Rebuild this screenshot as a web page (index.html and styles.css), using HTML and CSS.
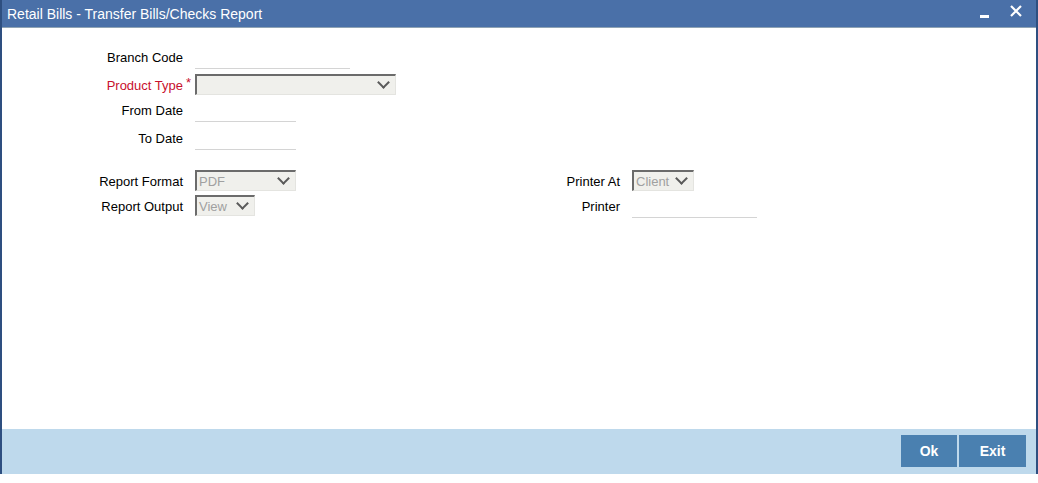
FILE: index.html
```html
<!DOCTYPE html>
<html>
<head>
<meta charset="utf-8">
<link rel="stylesheet" href="styles.css">
</head>
<body>
<div class="window">
  <div class="titlebar">
    <span class="title">Retail Bills - Transfer Bills/Checks Report</span>
    <span class="controls">
      <span class="min"></span>
      <svg class="close" width="12" height="12" viewBox="0 0 12 12"><path d="M1 1L11 11M11 1L1 11" stroke="#fff" stroke-width="2.2"/></svg>
    </span>
  </div>
  <div class="content">
    <div class="group top">
      <div class="row r1"><label class="lbl">Branch Code</label><span class="line w155"></span></div>
      <div class="row r2"><label class="lbl req">Product Type<span class="star">*</span></label><span class="sel w201"><span class="val"></span><span class="chev"></span></span></div>
      <div class="row r3"><label class="lbl">From Date</label><span class="line w101"></span></div>
      <div class="row r4"><label class="lbl">To Date</label><span class="line w101"></span></div>
    </div>
    <div class="cols">
      <div class="group">
        <div class="row r5"><label class="lbl">Report Format</label><span class="sel dis w101"><span class="val">PDF</span><span class="chev"></span></span></div>
        <div class="row r6"><label class="lbl">Report Output</label><span class="sel dis w60"><span class="val">View</span><span class="chev"></span></span></div>
      </div>
      <div class="group right">
        <div class="row r5"><label class="lbl lbl2">Printer At</label><span class="sel dis w62"><span class="val">Client</span><span class="chev"></span></span></div>
        <div class="row r6"><label class="lbl lbl2">Printer</label><span class="line w125"></span></div>
      </div>
    </div>
  </div>
  <div class="footer">
    <button class="btn ok">Ok</button><button class="btn exit">Exit</button>
  </div>
</div>
</body>
</html>
```
FILE: styles.css
```css
html, body { margin: 0; padding: 0; background: #fff; }
body { width: 1038px; height: 483px; overflow: hidden; font-family: "Liberation Sans", Arial, sans-serif; font-size: 13px; color: #000; }
.window { width: 1034px; height: 474px; border-left: 2px solid #2e4f80; border-right: 2px solid #2e4f80; display: flex; flex-direction: column; }
.titlebar { height: 28px; background: #4a70a8; border-bottom: 1px solid #8fa3b4; display: flex; align-items: center; justify-content: space-between; padding: 0 0 0 5px; box-sizing: border-box; flex: none; }
.title { color: #fff; font-size: 14px; }
.controls { display: flex; align-items: center; gap: 21px; margin-right: 14px; margin-top: -6px; }
.min { width: 9px; height: 3px; background: #fff; margin-top: 11px; }
.close { display: block; }
.content { flex: 1; position: relative; }
.group { display: flex; flex-direction: column; }
.top { padding-top: 17px; }
.row { display: flex; align-items: center; }
.lbl { width: 181px; text-align: right; padding-right: 12px; box-sizing: content-box; flex: none; line-height: 15px; padding-top: 2px; }
.req { color: #c8102e; position: relative; }
.star { position: absolute; right: 4px; top: -1px; color: #c8102e; font-size: 13px; }
.r1 { height: 22px; }
.r1 .line { margin-top: 25px; }
.r2 { height: 22px; margin-top: 6px; }
.r3 { height: 22px; margin-top: 3px; }
.r3 .line, .r4 .line { margin-top: 24px; }
.r4 { height: 22px; margin-top: 6px; }
.line { display: block; height: 1px; background: #d4d4d4; }
.w155 { width: 155px; }
.w101 { width: 101px; }
.w125 { width: 125px; }
.w201 { width: 201px; }
.w60 { width: 60px; }
.w62 { width: 62px; }
.sel { display: flex; align-items: center; justify-content: space-between; height: 21px; box-sizing: border-box; background: #f0f0ec; border-top: 2px solid #6b6b6b; border-left: 2px solid #6b6b6b; border-right: 1px solid #e4e4e0; border-bottom: 1px solid #e4e4e0; padding: 0 5px 0 2px; }
.val { color: #a0a0a0; font-size: 13px; }
.chev { width: 7px; height: 7px; border-right: 2px solid #5a5a5a; border-bottom: 2px solid #5a5a5a; transform: rotate(45deg); margin-top: -5px; margin-right: 2px; }
.cols { display: flex; padding-top: 22px; }
.r5 { height: 21px; }
.r5 .lbl { padding-top: 1px; }
.r6 { height: 21px; margin-top: 4px; }
.r6 .line { margin-top: 23px; }
.right { margin-left: 256px; }
.lbl2 { width: 68px; }
.footer { height: 45px; background: #bed9ec; flex: none; display: flex; justify-content: flex-end; align-items: flex-start; padding: 6px 10px 0 0; box-sizing: border-box; }
.btn { height: 32px; background: #4a80b0; color: #fff; border: none; font-family: "Liberation Sans", Arial, sans-serif; font-size: 14px; font-weight: bold; padding: 0; margin: 0; }
.ok { width: 56px; margin-right: 2px; }
.exit { width: 67px; }
```
